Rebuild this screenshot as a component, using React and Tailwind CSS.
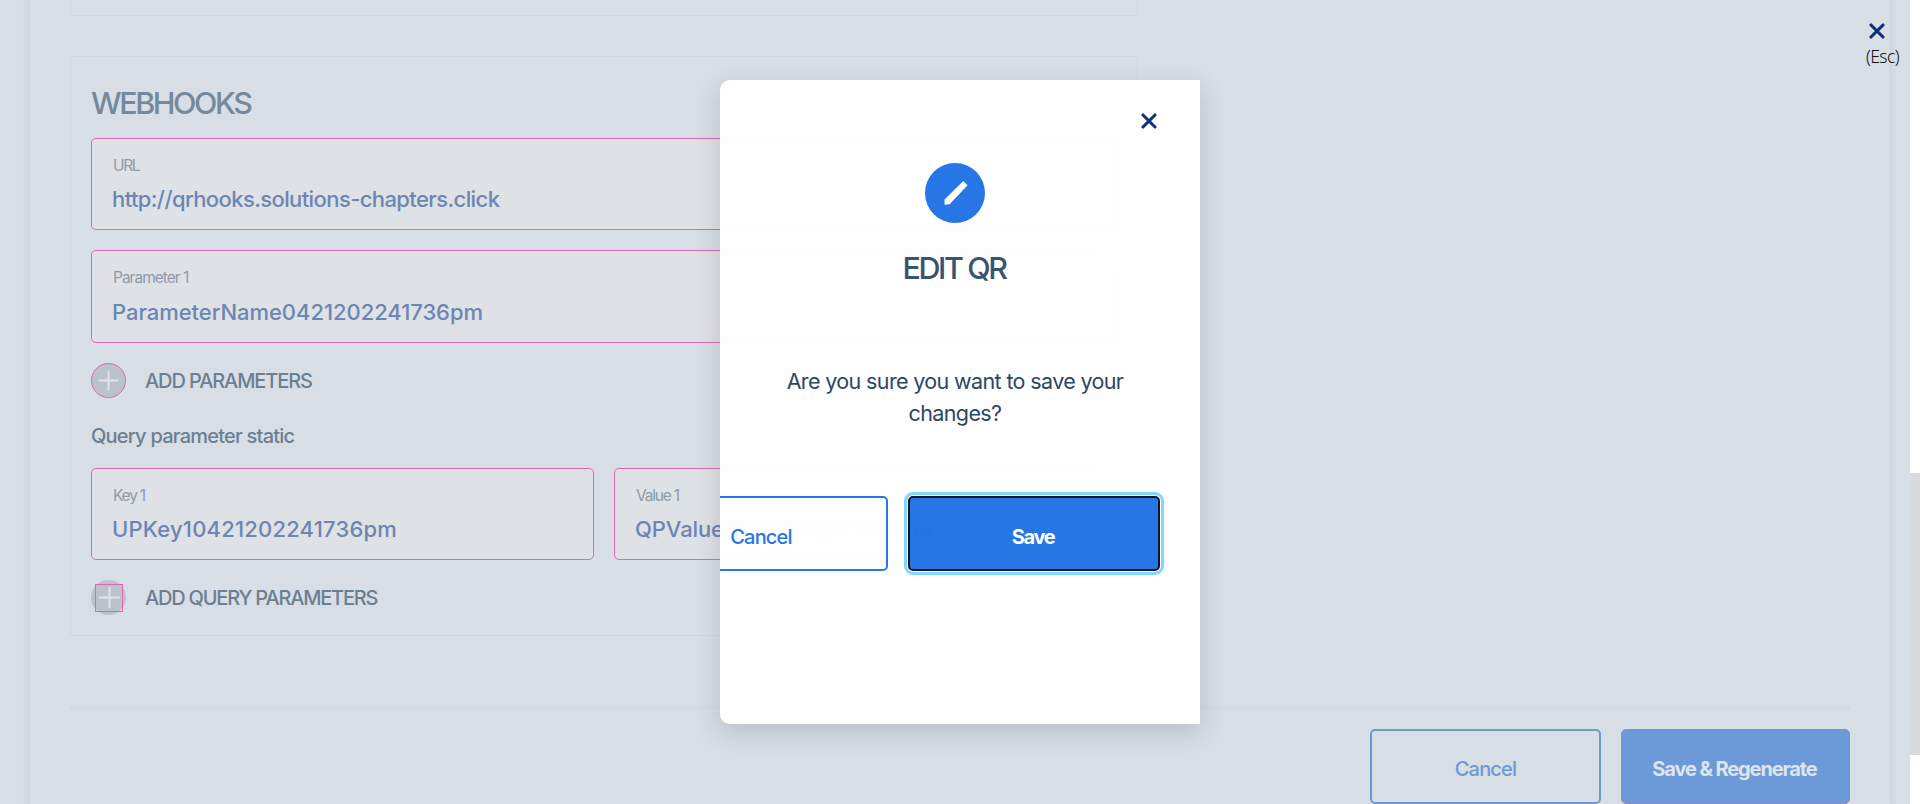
function PlusIcon({ className }) {
  return (
    <svg viewBox="0 0 35 35" className={className} fill="none" stroke="#dfe4e9" strokeWidth="2">
      <path d="M17.5 7v21M7 17.5h21" />
    </svg>
  );
}

function CloseIcon({ className }) {
  return (
    <svg viewBox="0 0 16 16" className={className} fill="none" stroke="#0d2f78" strokeWidth="3.1" strokeLinecap="round">
      <path d="M2 2l12 12M14 2L2 14" />
    </svg>
  );
}

function Field({ label, value, valueClass, className }) {
  return (
    <div className={`flex flex-col rounded-[5px] border border-[#e066b0] bg-[#dee1e5] pl-[21px] pt-[15px] whitespace-nowrap ${className}`}>
      <span className="text-[15.5px] leading-6 text-[#8f9ba8]">{label}</span>
      <span className={`mt-[5px] text-[22px] leading-8 font-medium text-[#6c86b3] ${valueClass}`}>{value}</span>
    </div>
  );
}

function RemoveBadge({ className }) {
  return (
    <div className={`absolute flex size-8 items-center justify-center rounded-full bg-[#bac3cc] ${className}`}>
      <svg viewBox="0 0 16 16" className="size-4" fill="none" stroke="#dfe4e9" strokeWidth="2">
        <path d="M2 2l12 12M14 2L2 14" />
      </svg>
    </div>
  );
}

function Webhooks() {
  return (
    <section className="mt-10 flex h-[580px] w-[1068px] shrink-0 flex-col border border-[#d2d6e0] px-5">
      <h2 className="flex h-[81px] shrink-0 items-center pt-2.5 text-[30.5px] font-medium tracking-[-2.4px] text-[#75899c]">WEBHOOKS</h2>
      <Field className="h-[92px]" label={<span className="tracking-[-1.4px]">URL</span>} value="http://qrhooks.solutions-chapters.click" valueClass="-ml-px tracking-[-0.6px]" />
      <div className="relative mt-5">
        <Field className="h-[93px]" label={<span className="tracking-[-1px]">Parameter 1</span>} value="ParameterName0421202241736pm" valueClass="-ml-px pt-px tracking-[-0.05px]" />
        <RemoveBadge className="-top-3.5 -right-3.5" />
      </div>
      <div className="mt-5 flex h-[35px] shrink-0 items-center gap-5">
        <span className="flex size-[35px] rounded-full border border-[#e066b0] bg-[#bac3cc]">
          <PlusIcon className="size-[33px]" />
        </span>
        <span className="-ml-px text-[20px] font-medium tracking-[-1.1px] text-[#6c7f92]">ADD PARAMETERS</span>
      </div>
      <h3 className="flex h-[70px] shrink-0 items-center pt-1.5 text-[20px] font-medium tracking-[-0.77px] text-[#6c7f92]">Query parameter static</h3>
      <div className="relative flex gap-5">
        <Field className="h-[92px] flex-1" label={<span className="tracking-[-1.2px]">Key 1</span>} value="UPKey10421202241736pm" valueClass="-ml-px tracking-[0.2px]" />
        <Field className="h-[92px] flex-1" label={<span className="tracking-[-1.2px]">Value 1</span>} value="QPValue10421202241736pm" valueClass="-ml-px tracking-[-0.1px]" />
        <RemoveBadge className="-top-3.5 -right-3.5" />
      </div>
      <div className="mt-5 flex h-[35px] shrink-0 items-center gap-5">
        <span className="flex size-[35px] items-center justify-center rounded-full bg-[#bac3cc] pl-px">
          <span className="flex size-7 items-center justify-center border border-[#e066b0]">
            <PlusIcon className="size-[35px] shrink-0" />
          </span>
        </span>
        <span className="-ml-px text-[20px] font-medium tracking-[-1.2px] text-[#6c7f92]">ADD QUERY PARAMETERS</span>
      </div>
    </section>
  );
}

function EditDialog() {
  return (
    <div className="absolute top-20 left-[720px] flex h-[644px] w-[480px] rounded-l-[10px] opacity-[0.99] shadow-[0_8px_24px_rgba(80,70,100,0.22)]">
      <div className="flex w-full flex-col overflow-hidden rounded-l-[10px] bg-white">
        <div className="flex h-[83px] w-full shrink-0 justify-end pt-[33px] pr-[43px]">
          <CloseIcon className="size-4" />
        </div>
        <div className="flex flex-col items-center pr-2.5">
          <div className="flex size-[60px] shrink-0 items-center justify-center rounded-full bg-[#2575e6] pl-0.5">
            <svg viewBox="0 0 24 24" className="size-6" fill="#fff">
              <path d="M0.5 23.7V18.6L19.3 0L23.6 4.3L5.6 23.2Z" />
            </svg>
          </div>
          <h2 className="mt-[25px] pr-0.5 text-[30.5px] leading-10 font-medium tracking-[-2.4px] text-[#38536f]">EDIT QR</h2>
          <p className="mt-[77px] w-[360px] text-center text-[21.5px] leading-8 tracking-[-0.63px] text-[#2c4564]">
            Are you sure you want to save your changes?
          </p>
        </div>
        <div className="mt-[67px] flex w-full justify-end gap-5 pr-10">
          <button className="flex h-[75px] w-[252px] shrink-0 items-center justify-center rounded-[5px] border-2 border-[#2575e6] pt-[7px] pr-0.5 text-[20px] font-medium tracking-[-0.8px] text-[#2575e6]">Cancel</button>
          <button className="flex h-[75px] w-[252px] shrink-0 items-center justify-center rounded-[5px] border-2 border-[#10141c] bg-[#2575e6] pt-[7px] pr-0.5 text-[20px] font-bold tracking-[-1.4px] text-white shadow-[0_0_0_1px_#fff,0_0_0_4px_#80d8ff]">Save</button>
        </div>
      </div>
    </div>
  );
}

export default function App() {
  return (
    <div className="relative flex h-[804px] w-full overflow-hidden bg-[#d7dee5] font-['Inter',sans-serif]">
      <div className="w-[22px] shrink-0" />
      <div className="w-[7px] shrink-0 bg-linear-to-r from-[#d7dee5] to-[#d2d7e0]" />
      <main className="flex w-[1861px] shrink-0 flex-col border-l border-[#d2d6e0] pr-10 pl-10">
        <div className="h-4 w-[1068px] shrink-0 border-x border-b border-[#d2d6e0]" />
        <Webhooks />
        <div className="mt-[70px] h-[3px] shrink-0 border border-[#d2d6e0]" />
        <div className="mt-5 flex justify-end gap-5">
          <button className="h-[75px] w-[231px] rounded-[5px] border-2 border-[#6c9ad8] pt-[5px] text-[20px] font-medium tracking-[-0.8px] text-[#6c9ad8]">Cancel</button>
          <button className="h-[75px] w-[229px] rounded-[5px] border border-[#e066b0] bg-[#6c9ad8] pt-[5px] pr-0.5 text-[20px] font-bold tracking-[-1.1px] text-[#dde4ec]">Save &amp; Regenerate</button>
        </div>
      </main>
      <div className="w-[7px] shrink-0 border-l border-[#d2d6e0] bg-linear-to-r from-[#d2d7e0] to-[#d7dee5]" />
      <div className="flex-1" />
      <div className="flex w-2.5 shrink-0 flex-col bg-white pt-[473px]">
        <div className="h-[282px] bg-[#d7dbdf]" />
      </div>

      <div className="absolute top-[23px] left-[1865px] flex w-[35px] flex-col items-center">
        <CloseIcon className="mr-[12px] size-4" />
        <span className="mt-[5px] font-['Noto_Sans',sans-serif] text-[17.5px] leading-6 font-light tracking-[-0.6px] text-[#101214]">(Esc)</span>
      </div>
      <EditDialog />
    </div>
  );
}
